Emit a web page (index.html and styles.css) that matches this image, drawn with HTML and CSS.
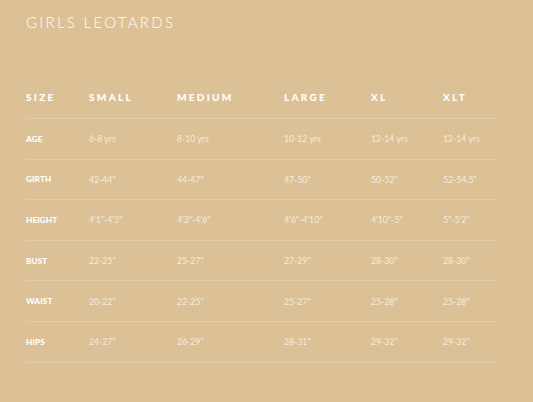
FILE: index.html
```html
<!DOCTYPE html>
<html>
<head>
<meta charset="utf-8">
<link rel="stylesheet" href="styles.css">
</head>
<body>
<div class="page">
  <h1 class="title">GIRLS LEOTARDS</h1>
  <div class="chart">
    <div class="row head">
      <div class="cell">SIZE</div>
      <div class="cell">SMALL</div>
      <div class="cell">MEDIUM</div>
      <div class="cell">LARGE</div>
      <div class="cell">XL</div>
      <div class="cell">XLT</div>
    </div>
    <div class="row">
      <div class="cell label">AGE</div>
      <div class="cell">6-8 yrs</div>
      <div class="cell">8-10 yrs</div>
      <div class="cell">10-12 yrs</div>
      <div class="cell">12-14 yrs</div>
      <div class="cell">12-14 yrs</div>
    </div>
    <div class="row">
      <div class="cell label">GIRTH</div>
      <div class="cell">42-44"</div>
      <div class="cell">44-47"</div>
      <div class="cell">47-50"</div>
      <div class="cell">50-52"</div>
      <div class="cell">52-54.5"</div>
    </div>
    <div class="row">
      <div class="cell label">HEIGHT</div>
      <div class="cell">4'1"-4'3"</div>
      <div class="cell">4'3"-4'6"</div>
      <div class="cell">4'6"-4'10"</div>
      <div class="cell">4'10"-5"</div>
      <div class="cell">5"-5'2"</div>
    </div>
    <div class="row">
      <div class="cell label">BUST</div>
      <div class="cell">22-25"</div>
      <div class="cell">25-27"</div>
      <div class="cell">27-29"</div>
      <div class="cell">28-30"</div>
      <div class="cell">28-30"</div>
    </div>
    <div class="row">
      <div class="cell label">WAIST</div>
      <div class="cell">20-22"</div>
      <div class="cell">22-25"</div>
      <div class="cell">25-27"</div>
      <div class="cell">25-28"</div>
      <div class="cell">25-28"</div>
    </div>
    <div class="row">
      <div class="cell label">HIPS</div>
      <div class="cell">24-27"</div>
      <div class="cell">26-29"</div>
      <div class="cell">28-31"</div>
      <div class="cell">29-32"</div>
      <div class="cell">29-32"</div>
    </div>
  </div>
</div>
</body>
</html>
```
FILE: styles.css
```css
html, body {
  margin: 0;
  padding: 0;
  background: #dcc196;
}
body {
  width: 533px;
  height: 402px;
  overflow: hidden;
  font-family: "Lato", "Liberation Sans", sans-serif;
  color: #ffffff;
}
.page {
  padding: 13px 36px 0 26px;
}
.title {
  margin: 0;
  font-size: 15px;
  line-height: 18px;
  font-weight: 300;
  letter-spacing: 2.3px;
  color: #fffdf8;
}
.chart {
  margin-top: 44px;
  width: 471px;
}
.row {
  display: grid;
  grid-template-columns: 63px 88px 107px 87px 72px 54px;
  align-items: center;
  height: 39.6px;
  border-bottom: 1px solid #e4ceaa;
}
.row.head {
  height: 43px;
}
.head .cell {
  font-size: 10px;
  font-weight: 900;
  letter-spacing: 2.3px;
  color: #ffffff;
}
.cell {
  font-size: 8.7px;
  color: #f6ecdc;
  white-space: nowrap;
}
.cell.label {
  font-size: 8.2px;
  font-weight: 900;
  color: #ffffff;
  letter-spacing: 0.1px;
}
```
